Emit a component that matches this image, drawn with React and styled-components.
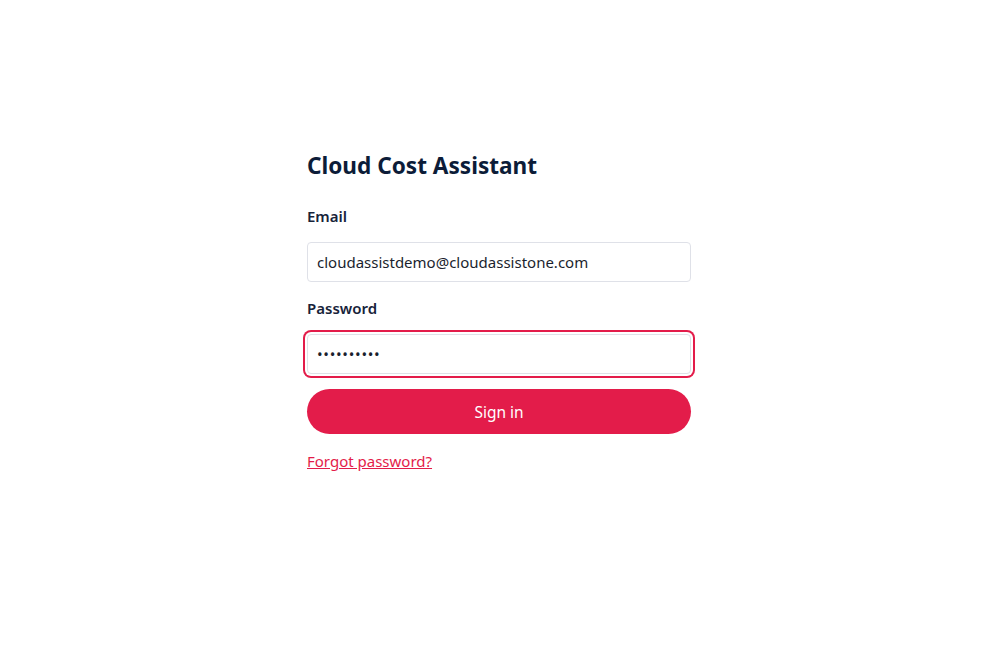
import React, { useState } from "react";
import styled, { createGlobalStyle } from "styled-components";

const GlobalStyle = createGlobalStyle`
  * { box-sizing: border-box; }
  body {
    margin: 0;
    background: #ffffff;
    font-family: "Noto Sans", "Open Sans", Arial, sans-serif;
    color: #14213a;
  }
`;

const App = () => {
  const [email, setEmail] = useState("cloudassistdemo@cloudassistone.com");
  const [password, setPassword] = useState("demo123456");

  return (
    <>
      <GlobalStyle />
      <Page>
        <LoginForm onSubmit={(e) => e.preventDefault()}>
          <Title>Cloud Cost Assistant</Title>

          <Field>
            <Label htmlFor="email">Email</Label>
            <Input
              id="email"
              type="email"
              value={email}
              onChange={(e) => setEmail(e.target.value)}
            />
          </Field>

          <Field>
            <Label htmlFor="password">Password</Label>
            <Input
              id="password"
              type="password"
              $focused
              autoFocus
              value={password}
              onChange={(e) => setPassword(e.target.value)}
            />
          </Field>

          <SubmitButton type="submit">Sign in</SubmitButton>

          <ForgotLink href="#">Forgot password?</ForgotLink>
        </LoginForm>
      </Page>
    </>
  );
};

const Page = styled.main`
  display: flex;
  justify-content: center;
  padding: 151px 6px 0 0;
  min-height: 666px;
`;

const LoginForm = styled.form`
  width: 384px;
  display: flex;
  flex-direction: column;
`;

const Title = styled.h1`
  margin: 0 0 25px;
  font-size: 22.6px;
  line-height: 30px;
  font-weight: 700;
  color: #0c1c38;
`;

const Field = styled.div`
  display: flex;
  flex-direction: column;
  margin-bottom: 16px;
`;

const Label = styled.label`
  font-size: 15px;
  line-height: 20px;
  font-weight: 600;
  color: #17233a;
  margin-bottom: 16px;
`;

const Input = styled.input`
  height: 40px;
  width: 100%;
  padding: 0 9px;
  border: 1px solid #dfe1e8;
  border-radius: 4px;
  font-family: inherit;
  font-size: 15px;
  color: #1b1f2e;
  background: #fff;
  outline: none;
  caret-color: #111;
  letter-spacing: ${({ type }) => (type === "password" ? "0.7px" : "0")};
  box-shadow: ${({ $focused }) =>
    $focused ? "0 0 0 2px #ffffff, 0 0 0 4px #e31c4a" : "none"};
`;

const SubmitButton = styled.button`
  height: 45px;
  margin-top: -1px;
  border: none;
  border-radius: 23px;
  background: #e31c4a;
  color: #ffffff;
  font-family: inherit;
  font-size: 15.5px;
  font-weight: 400;
  cursor: pointer;
`;

const ForgotLink = styled.a`
  align-self: flex-start;
  margin-top: 17px;
  font-size: 15px;
  line-height: 20px;
  color: #e31c4a;
  text-decoration: underline;
`;

export default App;
